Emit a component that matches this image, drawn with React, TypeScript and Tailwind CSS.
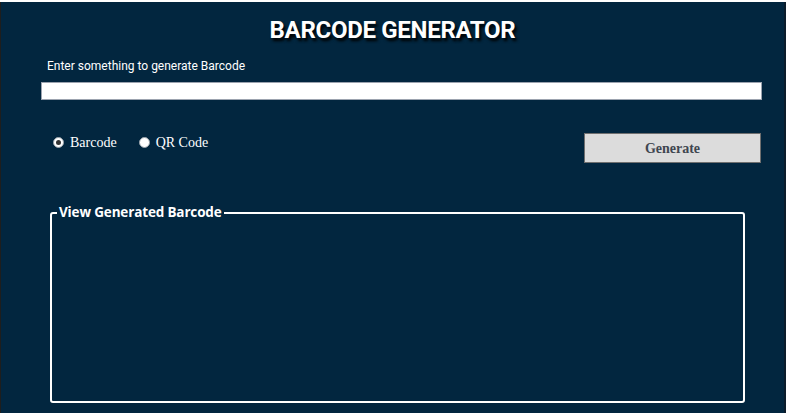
import { useState } from "react";

type Mode = "barcode" | "qr";

function Radio({
  label,
  checked,
  onSelect,
}: {
  label: string;
  checked: boolean;
  onSelect: () => void;
}) {
  return (
    <label
      className="flex cursor-pointer items-center gap-[6px] text-[14px] text-white"
      style={{ fontFamily: '"Liberation Serif", serif' }}
      onClick={onSelect}
    >
      <span className="flex h-[11px] w-[11px] items-center justify-center rounded-full border border-[#9aa3ab] bg-white">
        {checked && <span className="h-[5px] w-[5px] rounded-full bg-[#333]" />}
      </span>
      {label}
    </label>
  );
}

export default function App() {
  const [mode, setMode] = useState<Mode>("barcode");
  const [value, setValue] = useState("");

  return (
    <div className="min-h-[413px] bg-white pt-[2px]">
      <div className="h-[411px] overflow-hidden border-r-2 border-l border-r-[#0b1c2b] border-l-[#1e1e1e] bg-[#02263f]">
        <h1
          className="pt-[16px] text-center text-[24px] leading-none font-bold tracking-[-0.3px] text-white"
          style={{
            fontFamily: "Roboto, sans-serif",
            textShadow: "2px 3px 3px #000",
          }}
        >
          BARCODE GENERATOR
        </h1>

        <p
          className="mt-[18px] ml-[46px] text-[12px] leading-none text-white"
          style={{ fontFamily: "Roboto, sans-serif" }}
        >
          Enter something to generate Barcode
        </p>

        <input
          type="text"
          value={value}
          onChange={(e) => setValue(e.target.value)}
          className="mt-[10px] ml-[40px] block h-[18px] w-[721px] border border-[#9ca3af] bg-white px-1 text-[12px] outline-none"
        />

        <div className="mt-[33px] flex items-center pr-[23px] pl-[52px]">
          <div className="-mt-[12px] flex items-center gap-[22px]">
            <Radio
              label="Barcode"
              checked={mode === "barcode"}
              onSelect={() => setMode("barcode")}
            />
            <Radio
              label="QR Code"
              checked={mode === "qr"}
              onSelect={() => setMode("qr")}
            />
          </div>
          <button
            type="button"
            className="ml-auto h-[30px] w-[177px] border border-[#6f6f6f] bg-[#dcdcdc] text-[14px] font-bold text-[#3f4650]"
            style={{ fontFamily: '"Liberation Serif", serif' }}
          >
            Generate
          </button>
        </div>

        <fieldset className="mt-[43px] ml-[49px] h-[197px] w-[695px] rounded-[3px] border-2 border-white">
          <legend
            className="ml-[5px] px-[2px] text-[13.5px] leading-none font-bold tracking-[-0.15px] text-white"
            style={{ fontFamily: '"Open Sans", sans-serif' }}
          >
            View Generated Barcode
          </legend>
        </fieldset>
      </div>
    </div>
  );
}
